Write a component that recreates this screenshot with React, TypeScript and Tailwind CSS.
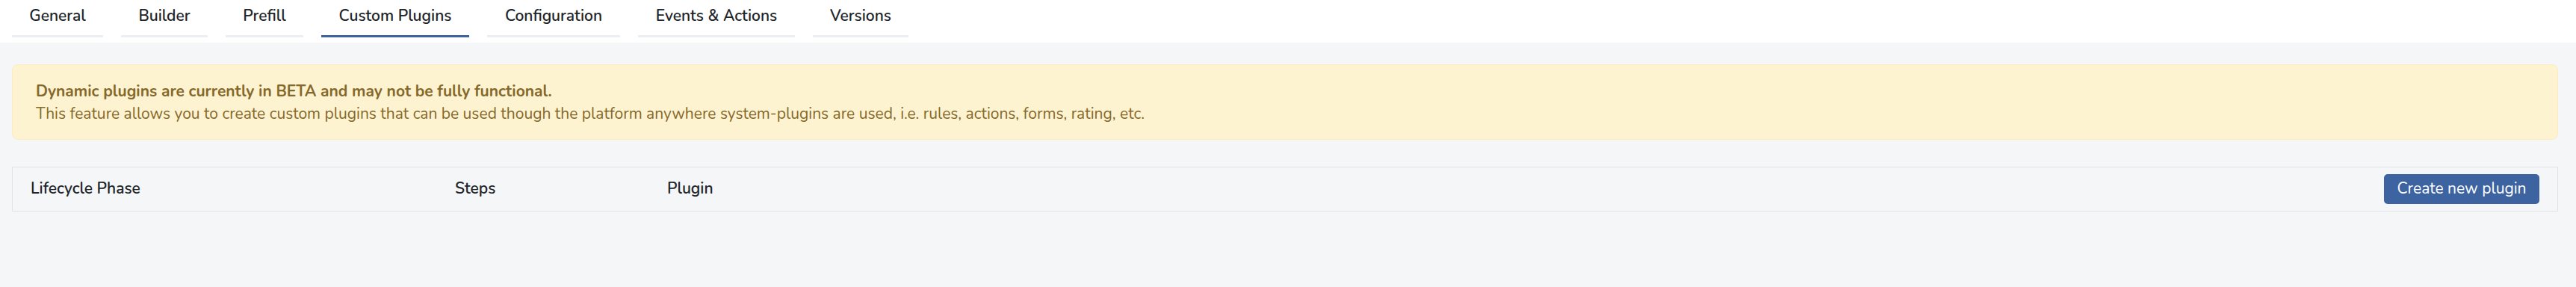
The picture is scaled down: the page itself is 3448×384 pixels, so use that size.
import React from 'react';

type Tab = {
  label: string;
  width: string;
  active?: boolean;
};

const TABS: Tab[] = [
  { label: 'General', width: 'w-[122px]' },
  { label: 'Builder', width: 'w-[116px]' },
  { label: 'Prefill', width: 'w-[104px]' },
  { label: 'Custom Plugins', width: 'w-[198px]', active: true },
  { label: 'Configuration', width: 'w-[178px]' },
  { label: 'Events & Actions', width: 'w-[210px]' },
  { label: 'Versions', width: 'w-[128px]' },
];

const FONT = "font-['Nunito','Open_Sans','Lato',sans-serif]";

export default function App() {
  return (
    <div className={`min-h-[384px] w-full bg-[#f5f6f8] ${FONT}`}>
      {/* Tabs */}
      <div className="flex h-[57px] gap-[24px] bg-white pl-4">
        {TABS.map(tab => (
          <div
            key={tab.label}
            className={`${tab.width} flex h-[50px] flex-col justify-between`}
          >
            <div className="flex h-[47px] items-center justify-center pb-[4px] text-[21px] font-semibold text-[#212529]">
              {tab.label}
            </div>
            <div
              className={`h-[3px] w-full ${
                tab.active ? 'bg-[#3d63a0]' : 'bg-[#ebeef2]'
              }`}
            />
          </div>
        ))}
      </div>

      <div className="pl-4 pr-6 pt-[29px]">
        {/* Beta warning */}
        <div className="flex h-[101px] flex-col justify-center rounded-[8px] border border-[#fdecbd] bg-[#fef3d1] px-[31px] text-[21px] leading-[30px] text-[#85692a]">
          <div className="font-bold">
            Dynamic plugins are currently in BETA and may not be fully functional.
          </div>
          <div>
            This feature allows you to create custom plugins that can be used though the platform anywhere system-plugins are used, i.e. rules, actions, forms, rating, etc.
          </div>
        </div>

        {/* Table header */}
        <div className="mt-[36px] flex h-[60px] items-center border border-[#dfe2e6] bg-[#f5f6f8] pl-[24px] pr-[24px] text-[21px] font-semibold text-[#212529]">
          <div className="w-[568px]">Lifecycle Phase</div>
          <div className="w-[284px]">Steps</div>
          <div className="flex-1">Plugin</div>
          <button
            type="button"
            className="flex h-[40px] w-[208px] items-center justify-center rounded-[5px] bg-[#3d63a0] text-[21px] font-normal text-white"
          >
            Create new plugin
          </button>
        </div>
      </div>
    </div>
  );
}
